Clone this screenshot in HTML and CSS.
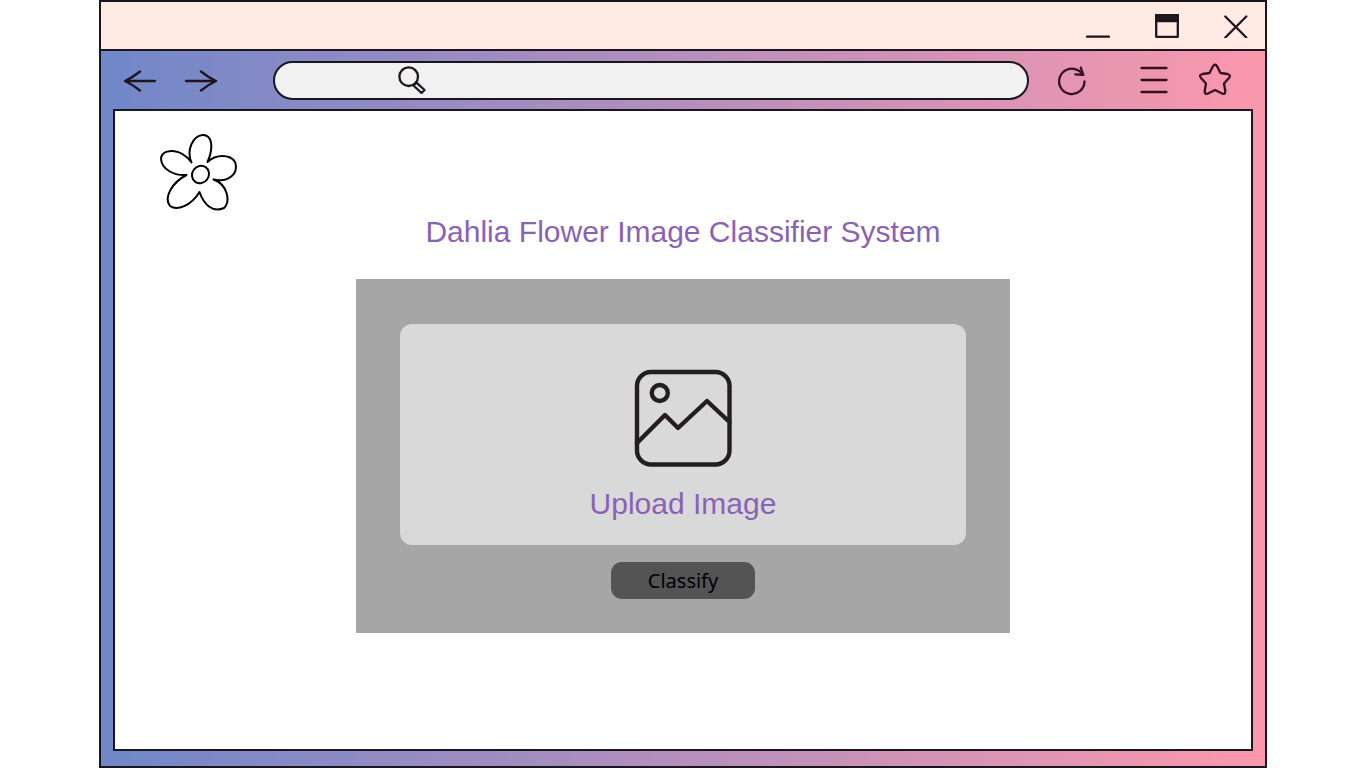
FILE: index.html
```html
<!DOCTYPE html>
<html lang="en">
<head>
<meta charset="utf-8">
<meta name="viewport" content="width=device-width, initial-scale=1">
<title>Dahlia Flower Image Classifier System</title>
<link rel="stylesheet" href="styles.css">
</head>
<body>
<div class="window">
  <header class="titlebar">
    <button class="icon-button" type="button" aria-label="Minimize">
      <svg width="24" height="24" viewBox="0 0 24 24"><path d="M1 22.700H23"/></svg>
    </button>
    <button class="icon-button" type="button" aria-label="Maximize">
      <svg width="24" height="24" viewBox="0 0 24 24"><path d="M1.200 1.200H22.800V22.800H1.200Z"/><path class="solid" d="M1 1H23V7H1Z"/></svg>
    </button>
    <button class="icon-button" type="button" aria-label="Close">
      <svg width="24" height="24" viewBox="0 0 24 24"><path d="M1.300 2.500L22.300 23.500M22.300 2.500L1.300 23.500"/></svg>
    </button>
  </header>

  <div class="toolbar">
    <nav class="history" aria-label="History">
      <button class="icon-button" type="button" aria-label="Back">
        <svg width="34" height="24" viewBox="0 0 34 24"><path d="M32 13H2M17 3.500Q9.500 9.500 2 13Q9.500 16.500 17 22.500"/></svg>
      </button>
      <button class="icon-button" type="button" aria-label="Forward">
        <svg width="34" height="24" viewBox="0 0 34 24"><path d="M2 13H32M17 3.500Q24.500 9.500 32 13Q24.500 16.500 17 22.500"/></svg>
      </button>
    </nav>
    <label class="address">
      <svg width="28" height="28" viewBox="0 0 28 28"><circle cx="10.700" cy="10.700" r="9.300"/><path d="M15.500 19.500L18.500 16.700L26.500 24L23.500 27Z"/></svg>
      <input class="address-input" type="text" aria-label="Address">
    </label>
    <div class="actions">
      <button class="icon-button" type="button" aria-label="Reload">
        <svg width="28" height="32" viewBox="0 0 28 32"><path d="M26.500 17.500A12.700 12.700 0 1 1 20 6.300Q23 8 25.300 10.800M22.800 3.500L25.300 10.800L17.300 10.300"/></svg>
      </button>
      <button class="icon-button" type="button" aria-label="Menu">
        <svg width="28" height="28" viewBox="0 0 28 28"><path d="M1.500 2H26.500M1.500 14H26.500M1.500 26H26.500"/></svg>
      </button>
      <button class="icon-button" type="button" aria-label="Favourites">
        <svg width="34" height="34" viewBox="0 0 34 34"><path d="M14.800 3.500Q17 0 19.200 3.500L22.500 10L29.500 11Q33.500 12 31 15L26 20.500L27.300 28Q27.500 31.800 24 30.500L17 27L10 30.500Q6.500 31.800 6.700 28L8 20.500L3 15Q.5 12 4.500 11L11.500 10Z"/></svg>
      </button>
    </div>
  </div>

  <main class="page">
    <svg class="flower" width="80" height="80" viewBox="0 0 80 80" role="img" aria-label="Flower">
      <ellipse cx="41.500" cy="41.500" rx="8.300" ry="9" transform="rotate(35 41.500 41.500)"/>
      <path d="M32.500 29.500C27 17 34 3 43.500 2C53 1.500 55 14 48.500 29C57 21 71 21 76 29C80 41 69 50 54.500 46.500C68 51 72 68 65 75C54 80 45 72 40.500 59C32 73 18 78 11 73C4 64 14 49 27.500 42C15 43 2 36 2 25C4 15 22 15 32.500 29.500Z"/>
    </svg>
    <h1 class="title">Dahlia Flower Image Classifier System</h1>
    <form class="panel">
      <button class="upload" type="button">
        <svg width="98" height="98" viewBox="0 0 98 98"><rect x="3" y="3" width="92.500" height="92.500" rx="14"/><circle cx="25.800" cy="24" r="8"/><path d="M3 74L31 46L44 59L73 32L95.500 53"/></svg>
        <span>Upload Image</span>
      </button>
      <button class="classify" type="button">Classify</button>
    </form>
  </main>
</div>
</body>
</html>
```
FILE: styles.css
```css
* {
  box-sizing: border-box;
}

body {
  margin: 0;
  background: #fff;
  font-family: "Liberation Sans", Arial, sans-serif;
}

svg {
  display: block;
  flex: none;
  fill: none;
  stroke: #1e151e;
  stroke-width: 2.3;
  stroke-linecap: round;
  stroke-linejoin: round;
}

.solid {
  fill: #1c1a1a;
}

.window {
  display: flex;
  flex-direction: column;
  min-height: 100vh;
  margin: 0 99px;
  border: 2px solid #1a1620;
  background: linear-gradient(90deg, #7087c9, #b58fbc 50%, #fb98ad);
}

.icon-button {
  padding: 0;
  border: 0;
  background: none;
}

.titlebar {
  display: flex;
  align-items: center;
  justify-content: flex-end;
  gap: 45px;
  height: 49px;
  padding-right: 17px;
  border-bottom: 2px solid #1a1620;
  background: #ffebe4;
}

.toolbar {
  display: flex;
  align-items: center;
  height: 58px;
  padding: 0 33px 0 22px;
}

.history {
  display: flex;
  gap: 27px;
  margin-right: 55px;
}

.address {
  display: flex;
  flex: 1;
  align-items: center;
  height: 39px;
  padding: 0 20px 0 123px;
  border: 2px solid #1a1620;
  border-radius: 20px;
  background: #f1f1f1;
}

.address-input {
  flex: 1;
  min-width: 0;
  margin-left: 12px;
  border: 0;
  outline: 0;
  background: none;
  font: inherit;
}

.actions {
  display: flex;
  align-items: center;
  margin-left: 29px;
}

.actions svg {
  stroke: #35101f;
}

.actions .icon-button + .icon-button {
  margin-left: 54px;
}

.actions .icon-button:last-child {
  margin-left: 30px;
}

.page {
  display: flex;
  flex: 1;
  flex-direction: column;
  align-items: center;
  margin: 0 12px 15px;
  padding: 22px 44px;
  border: 2px solid #1a1620;
  background: #fff;
}

.flower {
  align-self: flex-start;
  stroke: #000;
  stroke-width: 2;
}

.title {
  margin: 0 0 28px;
  color: #8a62b5;
  font-size: 30px;
  font-weight: 400;
  line-height: 38px;
}

.panel {
  display: flex;
  flex-direction: column;
  align-items: center;
  width: 100%;
  max-width: 654px;
  padding: 45px 44px 34px;
  background: #a6a6a6;
}

.upload {
  display: flex;
  flex-direction: column;
  align-items: center;
  gap: 18px;
  width: 100%;
  padding: 45px 20px 22px;
  border: 0;
  border-radius: 12px;
  background: #d9d9d9;
  color: #8a62b5;
  font: 30px/38px "Liberation Sans", Arial, sans-serif;
}

.upload svg {
  stroke: #231f20;
  stroke-width: 4.4;
}

.classify {
  width: 144px;
  height: 37px;
  margin-top: 17px;
  padding: 0;
  border: 0;
  border-radius: 11px;
  background: #545454;
  color: #000;
  font: 20px/26px "Noto Sans", sans-serif;
}
```
